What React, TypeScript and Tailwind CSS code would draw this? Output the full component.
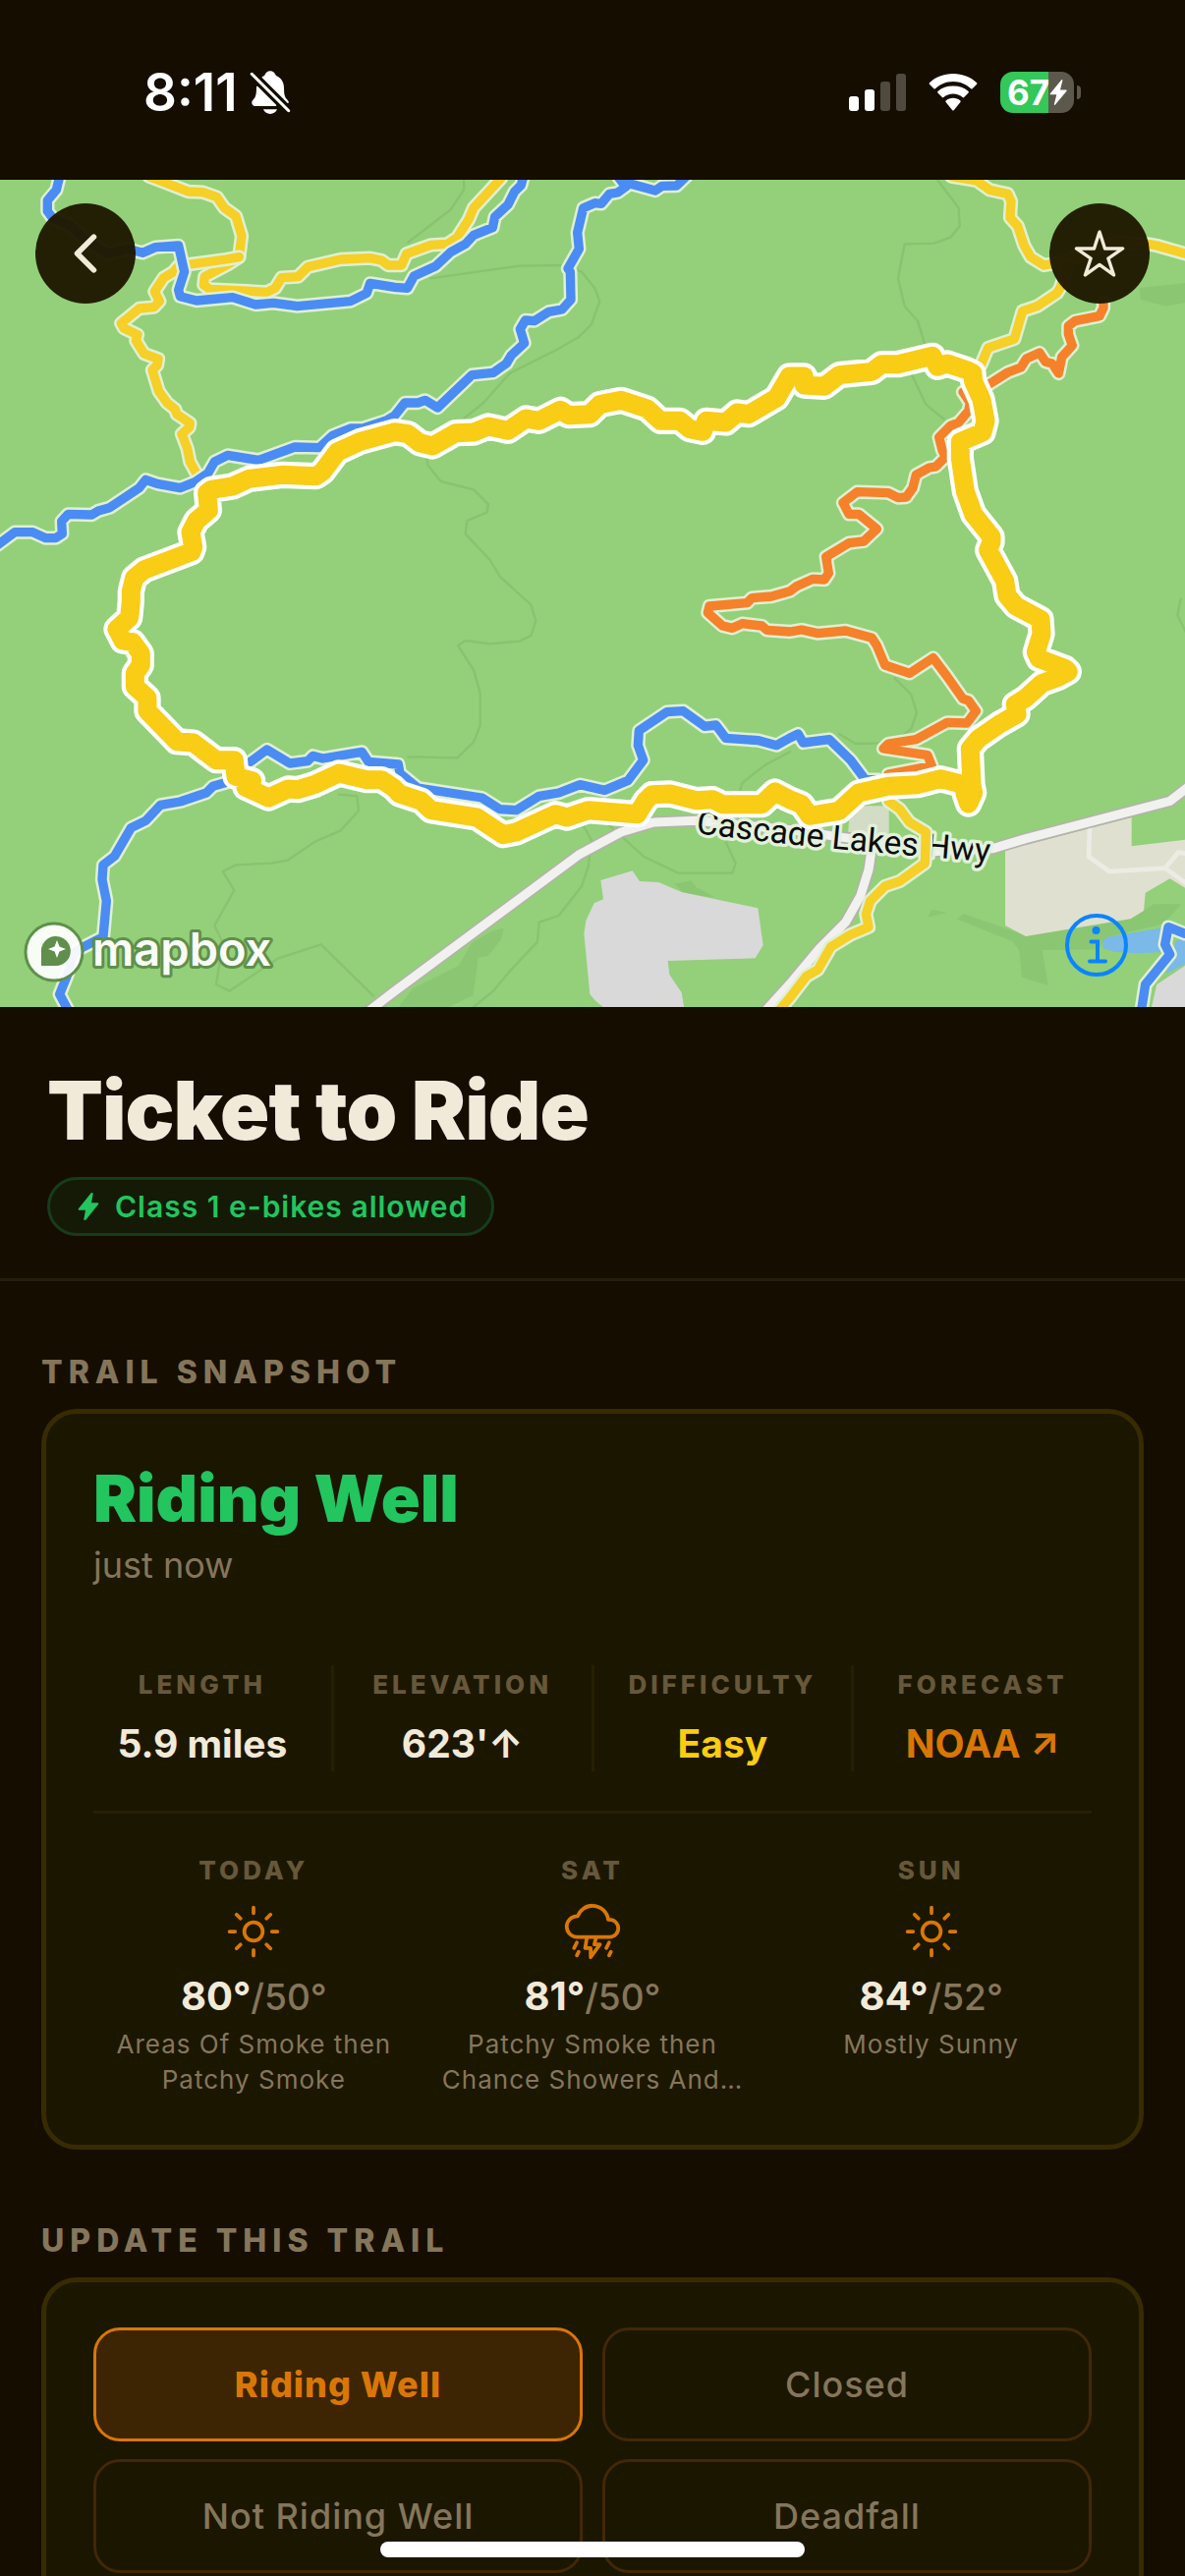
import React, { useState } from 'react';
import {
  IoChevronBack,
  IoFlash,
  IoNotificationsOff,
  IoStarOutline,
  IoSunnyOutline,
  IoThunderstormOutline,
} from 'react-icons/io5';

type Condition = 'Riding Well' | 'Closed' | 'Not Riding Well' | 'Deadfall';

const conditions: Condition[] = ['Riding Well', 'Closed', 'Not Riding Well', 'Deadfall'];

const forecast = [
  { day: 'TODAY', Icon: IoSunnyOutline, high: 80, low: 50, text: 'Areas Of Smoke then Patchy Smoke' },
  { day: 'SAT', Icon: IoThunderstormOutline, high: 81, low: 50, text: 'Patchy Smoke then Chance Showers And…' },
  { day: 'SUN', Icon: IoSunnyOutline, high: 84, low: 52, text: 'Mostly Sunny' },
];

// Map geometry, in a 3618 x 2526 space
const mainLoop =
  '400,1257 410,1216 440,1191 585,1136 590,1121 582,1076 600,1041 637,1009 632,956 645,946 710,936 760,913 860,901 965,905 985,891 1030,831 1100,799 1206,770 1246,776 1281,803 1321,813 1391,773 1446,771 1491,753 1551,766 1606,729 1646,736 1711,703 1736,719 1801,716 1831,686 1896,673 1976,699 2016,736 2076,736 2106,761 2146,769 2156,736 2216,741 2251,711 2286,716 2371,666 2410,600 2455,600 2455,627 2517,631 2562,596 2662,586 2692,563 2742,563 2847,538 2862,571 2892,561 2952,581 2970,590 2972,616 2997,671 3009,736 3000,771 2932,800 2932,851 2947,951 2972,1021 3027,1090 3027,1106 3017,1131 3068,1225 3075,1270 3102,1302 3177,1342 3180,1387 3163,1442 3172,1462 3252,1492 3262,1502 3232,1519 3182,1537 3132,1582 3100,1602 3105,1632 3052,1662 2987,1707 2962,1737 2967,1847 2972,1872 2957,1905 2947,1877 2942,1847 2872,1829 2802,1847 2712,1852 2622,1872 2562,1927 2472,1942 2447,1907 2410,1892 2366,1869 2326,1907 2206,1907 2176,1892 2126,1895 2046,1875 1991,1877 1971,1897 1946,1937 1796,1925 1731,1947 1696,1937 1576,1992 1536,2000 1456,1947 1316,1925 1286,1897 1220,1875 1200,1855 1165,1832 1120,1832 1035,1812 960,1847 910,1862 880,1860 820,1887 750,1855 770,1835 720,1822 715,1772 660,1772 590,1719 540,1715 450,1622 450,1582 412,1547 412,1507 430,1482 430,1447 405,1412 375,1407 357,1372 395,1337 400,1287';

const trails = [
  // yellow
  { color: '#f6cf27', points: '455,-10 510,11 575,36 620,38 662,53 685,86 720,111 738,171 730,236 700,256 625,296 622,321 640,334 815,343 840,331 860,299 910,296 940,266 1040,243 1130,239 1165,246 1185,261 1226,261 1241,226 1316,199 1366,196 1396,176 1431,121 1446,86 1530,-5' },
  { color: '#f6cf27', points: '730,236 690,243 545,263 530,281 500,299 472,341 487,371 470,389 425,393 370,438 378,453 420,473 415,491 440,531 483,547 480,566 465,581 485,646 510,681 535,701 540,716 580,743 578,756 555,776 572,821 580,861 605,906' },
  { color: '#f6cf27', points: '2905,-10 2982,3 3022,31 3077,43 3087,66 3084,116 3107,141 3127,201 3147,236 3187,261 3250,250 3400,190 3510,197 3532,201 3620,226' },
  { color: '#f6cf27', points: '3260,260 3237,330 3227,346 3167,386 3122,401 3097,486 3017,513 2995,565' },
  { color: '#f6cf27', points: '2712,1897 2747,1922 2777,1962 2827,1992 2824,2087 2747,2142 2702,2157 2657,2202 2644,2242 2652,2282 2597,2305 2537,2342 2497,2412 2462,2432 2412,2497 2380,2535' },
  // blue
  { color: '#4a8cf3', points: '182,-10 172,31 145,63 145,96 160,116 215,141 265,186 330,226 390,211 435,223 475,206 545,201 563,281 545,336 550,356 600,369 710,359 780,381 835,376 908,386 1070,371 1120,346 1130,316 1206,328 1244,331 1264,294 1331,263 1376,221 1421,196 1446,169 1504,146 1511,113 1551,76 1571,36 1591,16 1598,-10' },
  { color: '#4a8cf3', points: '-10,1117 45,1076 100,1076 140,1094 170,1094 190,1081 188,1043 208,1021 280,1023 300,1011 335,1001 425,941 445,916 480,928 550,941 595,923 635,896 655,861 695,841 790,856 900,816 975,818 1015,781 1070,759 1110,758 1180,735 1206,719 1236,681 1276,681 1298,673 1336,696 1441,596 1506,589 1546,561 1561,536 1601,499 1588,456 1604,429 1631,431 1676,403 1716,396 1743,366 1741,281 1734,271 1768,211 1763,161 1781,86 1816,71 1836,73 1861,43 1886,39 1911,21 1890,-5 1921,11 2001,33 2021,19 2066,18 2095,-10' },
  { color: '#4a8cf3', points: '760,1800 695,1839 650,1852 630,1872 550,1899 490,1909 445,1957 400,1979 350,2065 315,2092 312,2137 325,2202 315,2312 250,2345 225,2360 205,2430 182,2487 210,2540' },
  { color: '#4a8cf3', points: '765,1777 815,1740 885,1782 940,1775 955,1759 985,1767 1105,1747 1125,1777 1216,1785 1221,1812 1276,1857 1471,1887 1526,1922 1576,1925 1646,1882 1706,1872 1771,1847 1846,1864 1918,1834 1964,1772 1948,1727 1951,1682 2036,1625 2086,1622 2151,1669 2186,1665 2216,1705 2316,1712 2371,1727 2412,1704 2437,1692 2452,1719 2532,1709 2597,1772 2642,1832 2682,1832' },
  { color: '#4a8cf3', points: '3618,2302 3567,2282 3557,2335 3572,2365 3497,2457 3485,2535' },
  // orange
  { color: '#f5812a', points: '3369,376 3369,391 3357,416 3282,431 3262,446 3262,471 3274,506 3242,541 3232,591 3212,561 3192,556 3174,528 3134,546 3117,573 3077,588 3017,626 2960,640 2940,648 2962,681 2957,706 2927,741 2902,751 2867,786 2877,826 2887,846 2857,876 2837,879 2797,901 2787,941 2767,969 2742,971 2712,956 2617,953 2574,986 2592,1021 2622,1021 2677,1066 2637,1104 2592,1109 2522,1151 2530,1201 2517,1221 2482,1219 2432,1241 2412,1256 2356,1272 2296,1277 2281,1292 2166,1302 2161,1322 2206,1362 2236,1369 2266,1355 2326,1362 2341,1375 2412,1380 2447,1374 2497,1385 2582,1377 2662,1399 2677,1422 2702,1482 2777,1507 2849,1460 2892,1517 2940,1585 2957,1590 2980,1622 2952,1659 2892,1657 2797,1709 2712,1722 2697,1737 2832,1757 2845,1790 2712,1815' },
];

const footpaths = [
  '1416,-5 1416,31 1376,91 1246,191',
  '1316,301 1456,281 1586,263 1716,261 1776,281 1816,331 1831,371 1806,441 1766,481 1696,521 1556,591 1476,681 1426,721 1300,830 1306,871 1346,921 1446,946 1491,991 1486,1016 1426,1041 1421,1081 1496,1161 1526,1211 1576,1257 1621,1297 1636,1347 1621,1392 1586,1409 1496,1417 1421,1407 1398,1422 1446,1497 1466,1567 1466,1667 1446,1717 1396,1765 1246,1762',
  '2862,0 2927,86 2930,141 2902,176 2852,194 2762,196 2742,301 2762,386 2802,431 2822,496 2782,591 2827,686 2882,731',
  '2732,1522 2782,1572 2799,1627 2782,1677 2742,1707 2682,1720 2612,1722 2562,1692',
  '2412,1747 2336,1787 2266,1842 2256,1877',
  '2216,2022 2246,2087 2236,2117 2071,2117 1966,2067 1856,1967',
  '1781,1972 1806,2017 1796,2097 1776,2157 1706,2247 1646,2267 1641,2327 1556,2417 1506,2477 1446,2526',
  '1035,1877 1090,1882 1095,1927 1040,1987 960,2022 880,2077 830,2087 720,2092 680,2112 715,2169 655,2277 680,2330 660,2457 700,2477 850,2377 980,2335 1140,2492',
  '3605,1280 3595,1330 3620,1380',
];

const TrailMap: React.FC = () => (
  <svg
    viewBox="0 0 3618 2526"
    preserveAspectRatio="xMidYMid slice"
    className="block h-full w-full"
    fill="none"
    strokeLinejoin="round"
    strokeLinecap="round"
    role="img"
    aria-label="Trail map"
  >
    <rect width="3618" height="2526" fill="#93d079" />

    {/* land cover */}
    <g fill="#8bc672">
      <path d="M2922 2257 2942 2242 3070 2285 3132 2310 3492 2232 3522 2212 3607 2212 3552 2272 3382 2312 3352 2350 3182 2352 3200 2460 3120 2435 3112 2352 3090 2325Z" />
      <path d="M2832 2252 2845 2228 2890 2238Z" />
      <path d="M3480 330 3620 315 3620 375 3560 386 3482 365Z" />
      <path d="M1500 2295 1538 2285 1530 2320 1490 2370 1460 2375 1445 2490 1350 2535 1210 2535 1260 2470 1400 2400 1440 2330Z" />
      <path d="M2060 2150 2110 2140 2125 2160 2180 2190 2090 2180Z" />
    </g>
    <path d="M3069 2047 3455 1947 3455 2035 3618 2015 3618 2162 3572 2134 3497 2177 3492 2232 3452 2257 3132 2310 3069 2277Z" fill="#e0e0d0" />
    <path d="M2590 1987 2592 1957 2627 1912 2714 1912 2714 2027 2590 2027Z" fill="#d3dcc5" />
    <path d="M1834 2139 1931 2110 1953 2142 2011 2145 2081 2175 2314 2224 2330 2337 2306 2377 2039 2385 2044 2427 2081 2482 2089 2530 1846 2530 1818 2507 1801 2487 1783 2302 1789 2262 1814 2209 1842 2197Z" fill="#d9d9d9" />
    <path d="M3532 2457 3618 2400 3618 2530 3515 2530Z" fill="#d9d9d9" />
    <path d="M3367 2322 3382 2312 3560 2282 3555 2358 3472 2362 3402 2357 3367 2345ZM3618 2310 3590 2325 3560 2425 3618 2395Z" fill="#7ab9e8" />

    <g stroke="#89c270" strokeWidth="7">
      {footpaths.map((points) => (
        <polyline key={points} points={points} />
      ))}
    </g>

    {/* roads */}
    <g stroke="#ecece5" strokeWidth="14">
      <polyline points="3327,1977 3324,2067 3387,2112 3557,2102 3597,2054 3620,2057" />
      <polyline points="3557,2102 3620,2147" />
    </g>
    {[
      { stroke: '#b4b3aa', strokeWidth: 37 },
      { stroke: '#f1f1f0', strokeWidth: 27 },
    ].map((line) => (
      <g key={line.stroke} {...line}>
        <polyline points="1130,2535 1206,2477 1766,2062 1896,1992 1996,1962 2126,1957 2412,1985 2600,2012 2832,2052 3032,2042 3132,2012 3572,1897 3630,1852" />
        <polyline points="2662,2040 2652,2107 2627,2187 2582,2267 2502,2347 2412,2455 2335,2540" />
      </g>
    ))}

    <path id="highway" d="M2124 1995Q2500 2045 3100 2088" />
    <text
      className="font-[Roboto,sans-serif] text-[101px]"
      fill="#0b0b0b"
      stroke="#e3f1dc"
      strokeWidth="20"
      paintOrder="stroke"
    >
      <textPath href="#highway">Cascade Lakes Hwy</textPath>
    </text>

    {/* trails */}
    {trails.map((trail) => (
      <g key={trail.points}>
        <polyline points={trail.points} stroke="#dff0d3" strokeWidth="43" />
        <polyline points={trail.points} stroke={trail.color} strokeWidth="28" />
      </g>
    ))}
    <polygon points={mainLoop} stroke="#ffffff" strokeWidth="82" />
    <polygon points={mainLoop} stroke="#f9cc15" strokeWidth="57" />
  </svg>
);

const MapboxLogo: React.FC = () => (
  <svg viewBox="0 0 280 72" className="h-[72px] w-[280px]" aria-label="mapbox">
    <circle cx="31" cy="36" r="29" fill="#ffffff" fillOpacity="0.93" stroke="#5f8f4b" strokeWidth="3" />
    <path d="M18 50V37a15 15 0 1 1 15 13Z" fill="#5f8f4b" />
    <path d="M34 24l2.500 6.500L43 33l-6.500 2.500L34 42l-2.500-6.500L25 33l6.500-2.500Z" fill="#ffffff" />
    <text
      x="70"
      y="50"
      className="font-[Inter,sans-serif] text-[47px] font-semibold"
      fill="#f8fbf6"
      stroke="#5f8f4b"
      strokeWidth="6"
      strokeLinejoin="round"
      paintOrder="stroke"
    >
      mapbox
    </text>
  </svg>
);

const StatusBar: React.FC = () => (
  <header className="flex h-[183px] shrink-0 items-start justify-between pt-[64px] pr-[106px] pl-[146px] text-white">
    <div className="flex items-center gap-2">
      <span className="text-[53px] leading-[60px] font-semibold">8:11</span>
      <IoNotificationsOff size={50} />
    </div>
    <div className="flex h-[60px] items-center gap-[22px]">
      <svg viewBox="0 0 58 38" className="h-[38px] w-[58px]" fill="#ffffff">
        <rect x="0" y="23" width="10" height="15" rx="3" />
        <rect x="16" y="16" width="10" height="22" rx="3" />
        <rect x="32" y="8" width="10" height="30" rx="3" opacity="0.25" />
        <rect x="48" y="0" width="10" height="38" rx="3" opacity="0.25" />
      </svg>
      <svg viewBox="0 0 52 38" className="h-[38px] w-[52px]" fill="#ffffff">
        <path d="M26 8c7 0 13.400 2.800 18.200 7.300.4.400 1 .4 1.400 0l4.500-4.600c.4-.4.4-1.100 0-1.500C44 3.500 35.500 0 26 0S8 3.500 1.900 9.200c-.4.400-.4 1.100 0 1.500l4.500 4.600c.4.400 1 .4 1.400 0C12.600 10.800 19 8 26 8Z" />
        <path d="M26 20.500c3.800 0 7 1.300 9.700 3.600.4.400 1 .4 1.400 0l4.500-4.600c.4-.4.4-1.100 0-1.500-4.100-3.700-9.600-5.500-15.600-5.500s-11.500 1.800-15.600 5.500c-.4.400-.4 1.100 0 1.500l4.500 4.600c.4.400 1 .4 1.400 0 2.700-2.300 5.900-3.600 9.700-3.600Z" />
        <path d="M33.400 28.900c.4-.4.4-1.100 0-1.500-2-1.600-4.600-2.600-7.400-2.600s-5.400 1-7.400 2.600c-.4.400-.4 1.100 0 1.500l6.700 8.300c.4.400 1 .4 1.400 0Z" />
      </svg>
      <div className="flex items-center gap-[3px]">
        <div className="flex h-[42px] w-[75px] items-center rounded-[13px] bg-linear-to-r from-[#34c759] from-66% to-[#5c584c] to-66% pl-[7px]">
          <span className="text-[35px] leading-[42px] font-bold">67</span>
          <svg viewBox="0 0 18 26" className="h-[26px] w-[18px]" fill="#ffffff">
            <path d="M12.500 0 .8 14.200c-.4.500-.1 1.100.5 1.100h6L4.800 25.200c0 .7.700.9 1.200.4L17.500 11.700c.4-.5.100-1.100-.5-1.100h-6L13.500.500Z" />
          </svg>
        </div>
        <div className="h-[14px] w-1 rounded-r-full bg-[#5c584c]" />
      </div>
    </div>
  </header>
);

const SectionTitle: React.FC<{ children: React.ReactNode }> = ({ children }) => (
  <h2 className="mb-4 text-[32px] leading-[42px] font-extrabold tracking-[6px] text-[#85765a]">{children}</h2>
);

const Stat: React.FC<{ label: string; children: React.ReactNode }> = ({ label, children }) => (
  <div className="flex flex-1 flex-col items-center gap-5 py-1">
    <dt className="text-[26px] leading-8 font-extrabold tracking-[4px] text-[#665839]">{label}</dt>
    <dd className="text-[39px] leading-[48px] font-bold">{children}</dd>
  </div>
);

const App: React.FC = () => {
  const [condition, setCondition] = useState<Condition>('Riding Well');
  const [isFavorite, setIsFavorite] = useState(false);

  return (
    <div className="relative flex h-screen flex-col overflow-hidden bg-[#140d00] font-[Inter,sans-serif] text-[#f2ead8]">
      <StatusBar />

      <main className="min-h-0 flex-1 overflow-y-auto [scrollbar-width:none]">
        <div className="relative h-[842px]">
          <TrailMap />
          <button
            type="button"
            aria-label="Back"
            className="absolute top-6 left-9 flex size-[102px] items-center justify-center rounded-full bg-[#1f1900]/97"
          >
            <IoChevronBack size={60} />
          </button>
          <button
            type="button"
            aria-label="Favorite"
            aria-pressed={isFavorite}
            onClick={() => setIsFavorite(!isFavorite)}
            className="absolute top-6 right-9 flex size-[102px] items-center justify-center rounded-full bg-[#1f1900]/97"
          >
            <IoStarOutline size={54} />
          </button>
          <a href="#mapbox" className="absolute bottom-5 left-6">
            <MapboxLogo />
          </a>
          <button type="button" aria-label="Map information" className="absolute right-[57px] bottom-[30px]">
            <svg viewBox="0 0 66 66" className="size-[66px]" fill="none" stroke="#0a84ff" strokeWidth="4" strokeLinecap="round">
              <circle cx="33" cy="33" r="30" />
              <circle cx="32.500" cy="18" r="4" fill="#0a84ff" stroke="none" />
              <path d="M27.500 29.500h6.500v20M26 49.500h16" />
            </svg>
          </button>
        </div>

        <section className="flex flex-col items-start gap-5 border-b-3 border-[#241f0a] px-12 pt-[57px] pb-[43px]">
          <h1 className="text-[83px] leading-[96px] font-black tracking-[-1px]">Ticket to Ride</h1>
          <p className="flex h-[60px] items-center gap-3 rounded-full border-3 border-[#173c1b] bg-[#141a06] px-6 text-[30px] font-semibold tracking-[1px] text-[#22c55e]">
            <IoFlash size={30} />
            Class 1 e-bikes allowed
          </p>
        </section>

        <div className="flex flex-col gap-18 px-[42px] pt-18">
          <section>
            <SectionTitle>TRAIL SNAPSHOT</SectionTitle>
            <div className="rounded-[36px] border-5 border-[#372b00] bg-[#1b1600] px-12 pt-[46px] pb-12">
              <p className="text-[66px] leading-20 font-black text-[#22c55e]">Riding Well</p>
              <p className="mt-1.5 text-[36px] leading-11 text-[#85765a]">just now</p>

              <dl className="-mx-5 mt-20 flex divide-x-3 divide-[#272000]">
                <Stat label="LENGTH">5.9 miles</Stat>
                <Stat label="ELEVATION">623'↑</Stat>
                <Stat label="DIFFICULTY">
                  <span className="text-[#facc15]">Easy</span>
                </Stat>
                <Stat label="FORECAST">
                  <a href="#noaa" className="text-[#d97706]">NOAA ↗</a>
                </Stat>
              </dl>

              <div className="mt-10 grid grid-cols-3 gap-[18px] border-t-3 border-[#272000] pt-[42px]">
                {forecast.map(({ day, Icon, high, low, text }) => (
                  <div key={day} className="flex flex-col items-center text-center">
                    <h3 className="text-[26px] leading-8 font-extrabold tracking-[4px] text-[#665839]">{day}</h3>
                    <Icon size={60} className="mt-4 text-[#d97706]" />
                    <p className="mt-3 text-[40px] leading-[48px] font-bold">
                      {high}°<span className="text-[37px] font-medium text-[#85765a]">/{low}°</span>
                    </p>
                    <p className="mt-1.5 text-[26px] leading-9 tracking-[1px] text-[#85765a]">{text}</p>
                  </div>
                ))}
              </div>
            </div>
          </section>

          <section>
            <SectionTitle>UPDATE THIS TRAIL</SectionTitle>
            <div className="grid grid-cols-2 gap-x-5 gap-y-[18px] rounded-[36px] border-5 border-[#372b00] bg-[#1b1600] px-12 pt-[46px] pb-12">
              {conditions.map((name) => (
                <button
                  key={name}
                  type="button"
                  aria-pressed={condition === name}
                  onClick={() => setCondition(name)}
                  className={`h-[116px] rounded-[27px] border-3 text-[36px] tracking-[1px] ${
                    condition === name
                      ? 'border-[#d97706] bg-[#3d2503] font-extrabold text-[#d97706]'
                      : 'border-[#422806] font-medium text-[#85765a]'
                  }`}
                >
                  {name}
                </button>
              ))}
            </div>
          </section>
        </div>
      </main>

      <div className="absolute inset-x-0 bottom-[19px] mx-auto h-4 w-[432px] rounded-full bg-white" />
    </div>
  );
};

export default App;
